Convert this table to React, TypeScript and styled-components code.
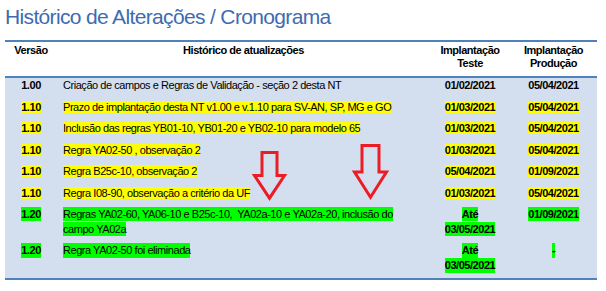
import React from "react";
import styled, { createGlobalStyle } from "styled-components";

const GlobalStyle = createGlobalStyle`
  html, body { margin: 0; padding: 0; background: #ffffff; }
  body { font-family: "Liberation Sans", Arial, sans-serif; color: #000; }
`;

const COLUMNS = "52px 373px 80px 87px";

const Page = styled.div`
  position: relative;
  width: 606px;
  height: 291px;
  overflow: hidden;
  box-sizing: border-box;
  padding: 5px 9px 0 5px;
`;

const Title = styled.h1`
  margin: 0 0 11px 0;
  font-size: 21px;
  line-height: 24px;
  font-weight: normal;
  letter-spacing: -0.65px;
  color: #3e6bb0;
  white-space: nowrap;
`;

const Table = styled.div`
  width: 592px;
  border-top: 2px solid #4f81bd;
  border-bottom: 2px solid #4f81bd;
  font-size: 11px;
  letter-spacing: -0.45px;
`;

const HeaderRow = styled.div`
  display: grid;
  grid-template-columns: ${COLUMNS};
  box-sizing: border-box;
  height: 36px;
  padding-top: 1.5px;
  border-bottom: 2px solid #4f81bd;
  background: #ffffff;
  font-weight: bold;
  line-height: 13px;
  text-align: center;
`;

const HeaderCell = styled.div``;

const Body = styled.div`
  display: grid;
  row-gap: 6.5px;
  padding-bottom: 4.5px;
  background: #d3dfee;
`;

const Row = styled.div`
  display: grid;
  grid-template-columns: ${COLUMNS};
  line-height: 15px;
`;

const Cell = styled.div<{ $align: "left" | "center"; $bold?: boolean }>`
  text-align: ${(p) => p.$align};
  font-weight: ${(p) => (p.$bold ? "bold" : "normal")};
  padding-left: ${(p) => (p.$align === "left" ? "6px" : "0")};
`;

type Tone = "none" | "yellow" | "green";

const Mark = styled.span<{ $tone: Tone }>`
  background: ${(p) =>
    p.$tone === "yellow" ? "#ffff00" : p.$tone === "green" ? "#00ff00" : "transparent"};
  padding: ${(p) => (p.$tone === "green" ? "1.3px 0" : "0")};
  -webkit-box-decoration-break: clone;
  box-decoration-break: clone;
`;

const ArrowSvg = styled.svg<{ $x: number; $y: number }>`
  position: absolute;
  left: ${(p) => p.$x}px;
  top: ${(p) => p.$y}px;
  overflow: visible;
`;

function DownArrow({
  x,
  y,
  w,
  h,
  shaft,
  neck,
}: {
  x: number;
  y: number;
  w: number;
  h: number;
  shaft: number;
  neck: number;
}) {
  const s = 1.5;
  const cx = w / 2;
  const half = shaft / 2 - s;
  const pts = [
    [cx - half, s],
    [cx + half, s],
    [cx + half, neck],
    [w - s, neck],
    [cx, h - 2.8],
    [s, neck],
    [cx - half, neck],
  ]
    .map((p) => p.join(","))
    .join(" ");
  return (
    <ArrowSvg $x={x} $y={y} width={w} height={h} viewBox={`0 0 ${w} ${h}`}>
      <polygon points={pts} fill="none" stroke="#ec1c24" strokeWidth={3} strokeLinejoin="miter" />
    </ArrowSvg>
  );
}

type Entry = {
  version: string;
  text: React.ReactNode;
  teste: React.ReactNode;
  prod: string;
  tone: Tone;
};

const entries: Entry[] = [
  {
    version: "1.00",
    text: "Criação de campos e Regras de Validação - seção 2 desta NT",
    teste: "01/02/2021",
    prod: "05/04/2021",
    tone: "none",
  },
  {
    version: "1.10",
    text: "Prazo de implantação desta NT v1.00 e v.1.10 para SV-AN, SP, MG e GO",
    teste: "01/03/2021",
    prod: "05/04/2021",
    tone: "yellow",
  },
  {
    version: "1.10",
    text: "Inclusão das regras YB01-10, YB01-20 e YB02-10 para modelo 65",
    teste: "01/03/2021",
    prod: "05/04/2021",
    tone: "yellow",
  },
  {
    version: "1.10",
    text: "Regra YA02-50 , observação 2",
    teste: "01/03/2021",
    prod: "05/04/2021",
    tone: "yellow",
  },
  {
    version: "1.10",
    text: "Regra B25c-10, observação 2",
    teste: "05/04/2021",
    prod: "01/09/2021",
    tone: "yellow",
  },
  {
    version: "1.10",
    text: "Regra I08-90, observação a critério da UF",
    teste: "01/03/2021",
    prod: "05/04/2021",
    tone: "yellow",
  },
  {
    version: "1.20",
    text: (
      <>
        Regras YA02-60, YA06-10 e B25c-10,{"\u00a0"} YA02a-10 e YA02a-20, inclusão do
        <br />
        campo YA02a
      </>
    ),
    teste: (
      <>
        Até
        <br />
        03/05/2021
      </>
    ),
    prod: "01/09/2021",
    tone: "green",
  },
  {
    version: "1.20",
    text: "Regra YA02-50 foi eliminada",
    teste: (
      <>
        Até
        <br />
        03/05/2021
      </>
    ),
    prod: "-",
    tone: "green",
  },
];

export default function App() {
  return (
    <>
      <GlobalStyle />
      <Page>
        <Title>Histórico de Alterações / Cronograma</Title>
        <Table>
          <HeaderRow>
            <HeaderCell>Versão</HeaderCell>
            <HeaderCell>Histórico de atualizações</HeaderCell>
            <HeaderCell>
              Implantação
              <br />
              Teste
            </HeaderCell>
            <HeaderCell>
              Implantação
              <br />
              Produção
            </HeaderCell>
          </HeaderRow>
          <Body>
            {entries.map((e, i) => (
              <Row key={i}>
                <Cell $align="center" $bold>
                  <Mark $tone={e.tone}>{e.version}</Mark>
                </Cell>
                <Cell $align="left">
                  <Mark $tone={e.tone}>{e.text}</Mark>
                </Cell>
                <Cell $align="center" $bold>
                  <Mark $tone={e.tone}>{e.teste}</Mark>
                </Cell>
                <Cell $align="center" $bold>
                  <Mark $tone={e.tone}>{e.prod}</Mark>
                </Cell>
              </Row>
            ))}
          </Body>
        </Table>
        <DownArrow x={253} y={151} w={33} h={50} shaft={18} neck={24.5} />
        <DownArrow x={353} y={144} w={35} h={56} shaft={20} neck={28} />
      </Page>
    </>
  );
}
